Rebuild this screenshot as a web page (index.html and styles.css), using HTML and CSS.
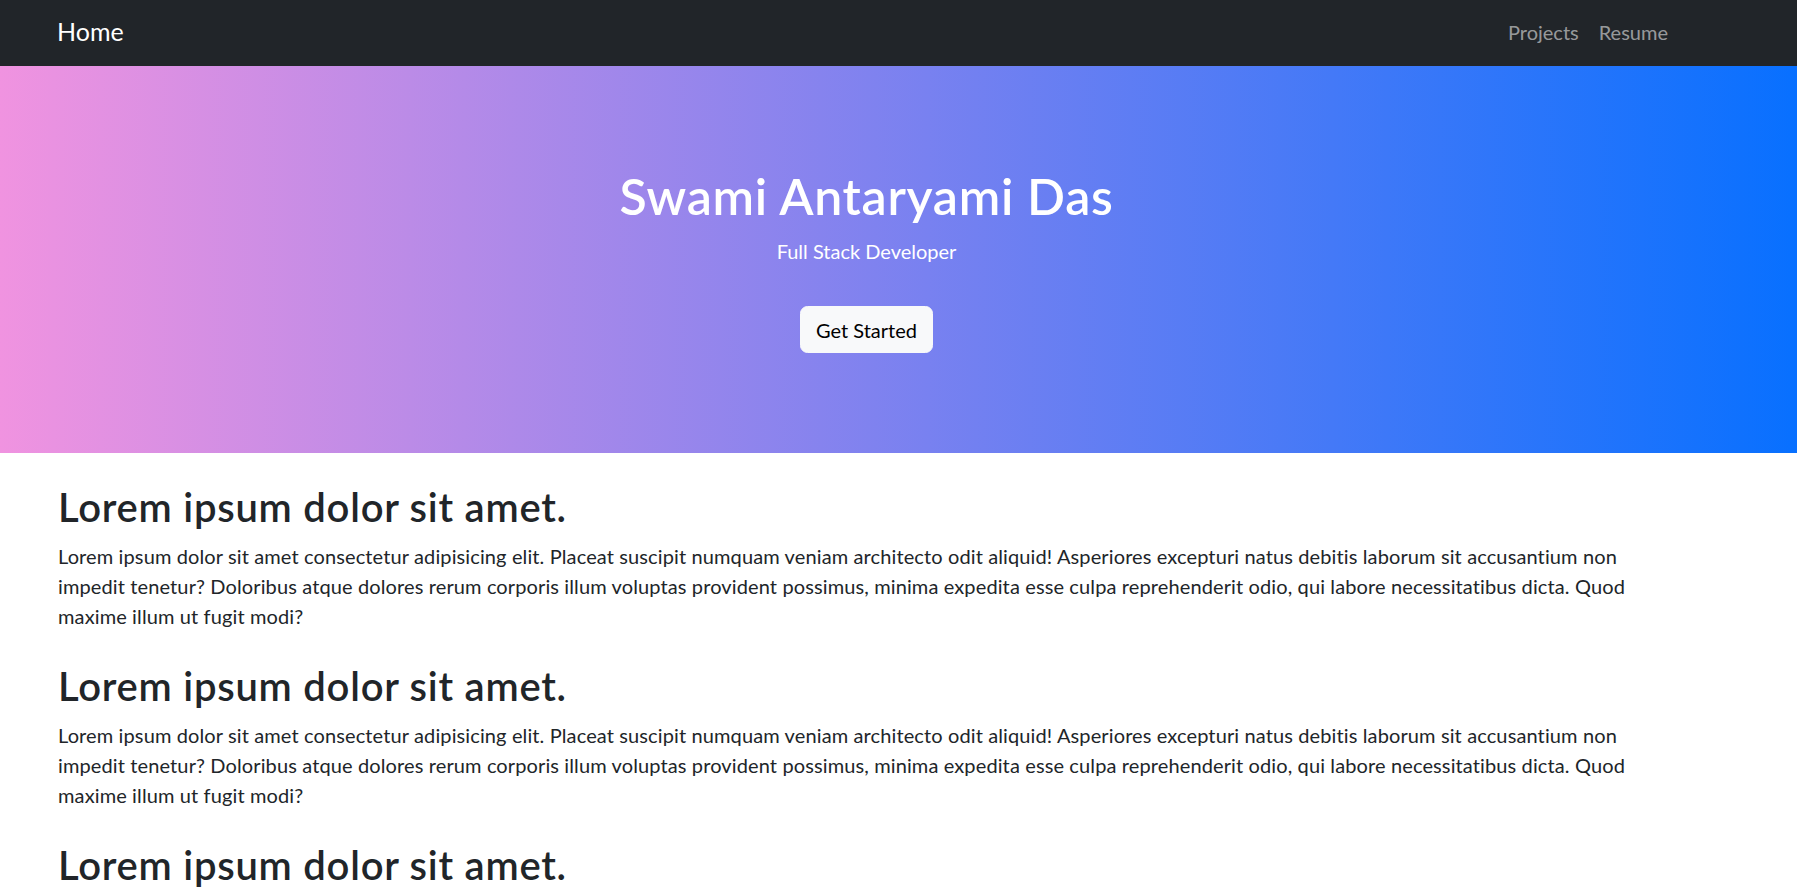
FILE: index.html
```html
<!DOCTYPE html>
<html lang="en">
<head>
<meta charset="utf-8">
<title>Swami Antaryami Das</title>
<link rel="stylesheet" href="styles.css">
</head>
<body>
<nav class="navbar">
  <div class="nav-inner">
    <a class="brand" href="#">Home</a>
    <ul class="nav-links">
      <li><a href="#">Projects</a></li>
      <li><a href="#">Resume</a></li>
    </ul>
  </div>
</nav>
<header class="hero">
  <div class="hero-inner">
    <h1 class="hero-title">Swami Antaryami Das</h1>
    <p class="hero-sub">Full Stack Developer</p>
    <a class="btn-light" href="#">Get Started</a>
  </div>
</header>
<main class="content">
  <section class="block">
    <h2>Lorem ipsum dolor sit amet.</h2>
    <p>Lorem ipsum dolor sit amet consectetur adipisicing elit. Placeat suscipit numquam veniam architecto odit aliquid! Asperiores excepturi natus debitis laborum sit accusantium non impedit tenetur? Doloribus atque dolores rerum corporis illum voluptas provident possimus, minima expedita esse culpa reprehenderit odio, qui labore necessitatibus dicta. Quod maxime illum ut fugit modi?</p>
  </section>
  <section class="block">
    <h2>Lorem ipsum dolor sit amet.</h2>
    <p>Lorem ipsum dolor sit amet consectetur adipisicing elit. Placeat suscipit numquam veniam architecto odit aliquid! Asperiores excepturi natus debitis laborum sit accusantium non impedit tenetur? Doloribus atque dolores rerum corporis illum voluptas provident possimus, minima expedita esse culpa reprehenderit odio, qui labore necessitatibus dicta. Quod maxime illum ut fugit modi?</p>
  </section>
  <section class="block">
    <h2>Lorem ipsum dolor sit amet.</h2>
    <p>Lorem ipsum dolor sit amet consectetur adipisicing elit. Placeat suscipit numquam veniam architecto odit aliquid! Asperiores excepturi natus debitis laborum sit accusantium non impedit tenetur? Doloribus atque dolores rerum corporis illum voluptas provident possimus, minima expedita esse culpa reprehenderit odio, qui labore necessitatibus dicta. Quod maxime illum ut fugit modi?</p>
  </section>
</main>
</body>
</html>
```

FILE: styles.css
```css
* {
  box-sizing: border-box;
}

html, body {
  margin: 0;
  padding: 0;
}

body {
  font-family: Lato, "Liberation Sans", sans-serif;
  font-size: 20px;
  line-height: 30px;
  color: #212529;
  background: #ffffff;
}

a {
  text-decoration: none;
}

.navbar {
  background: #212529;
  height: 66px;
}

.nav-inner {
  height: 100%;
  display: flex;
  align-items: center;
  justify-content: space-between;
  padding-left: 57px;
  padding-right: 119px;
  padding-bottom: 2px;
}

.brand {
  color: #ffffff;
  font-size: 25px;
  line-height: 37.5px;
}

.nav-links {
  list-style: none;
  margin: 0;
  padding: 0;
  display: flex;
}

.nav-links a {
  display: block;
  padding: 0 10px;
  color: rgba(255, 255, 255, 0.55);
  font-size: 20px;
  line-height: 30px;
}

.hero {
  background: linear-gradient(to right, #f093e0, #0870ff);
  height: 387px;
}

.hero-inner {
  padding: 100px 120px 0 56px;
  display: flex;
  flex-direction: column;
  align-items: center;
  text-align: center;
  color: #ffffff;
}

.hero-title {
  margin: 0 0 10px;
  font-size: 50px;
  line-height: 60px;
  font-weight: 600;
  letter-spacing: 0.7px;
}

.hero-sub {
  margin: 0 0 40px;
  font-size: 20px;
  line-height: 30px;
}

.btn-light {
  display: inline-block;
  background: #f8f9fa;
  color: #000000;
  border: 1.25px solid #f8f9fa;
  border-radius: 7.5px;
  padding: 7.5px 15px;
  font-size: 20px;
  line-height: 30px;
}

.content {
  padding: 30px 120px 0 58px;
  display: flex;
  flex-direction: column;
  gap: 11px;
}

.block h2 {
  margin: 0 0 10px;
  font-size: 40px;
  line-height: 48px;
  font-weight: 600;
  letter-spacing: 0.75px;
}

.block p {
  margin: 0 0 20px;
  letter-spacing: 0.12px;
}
```
